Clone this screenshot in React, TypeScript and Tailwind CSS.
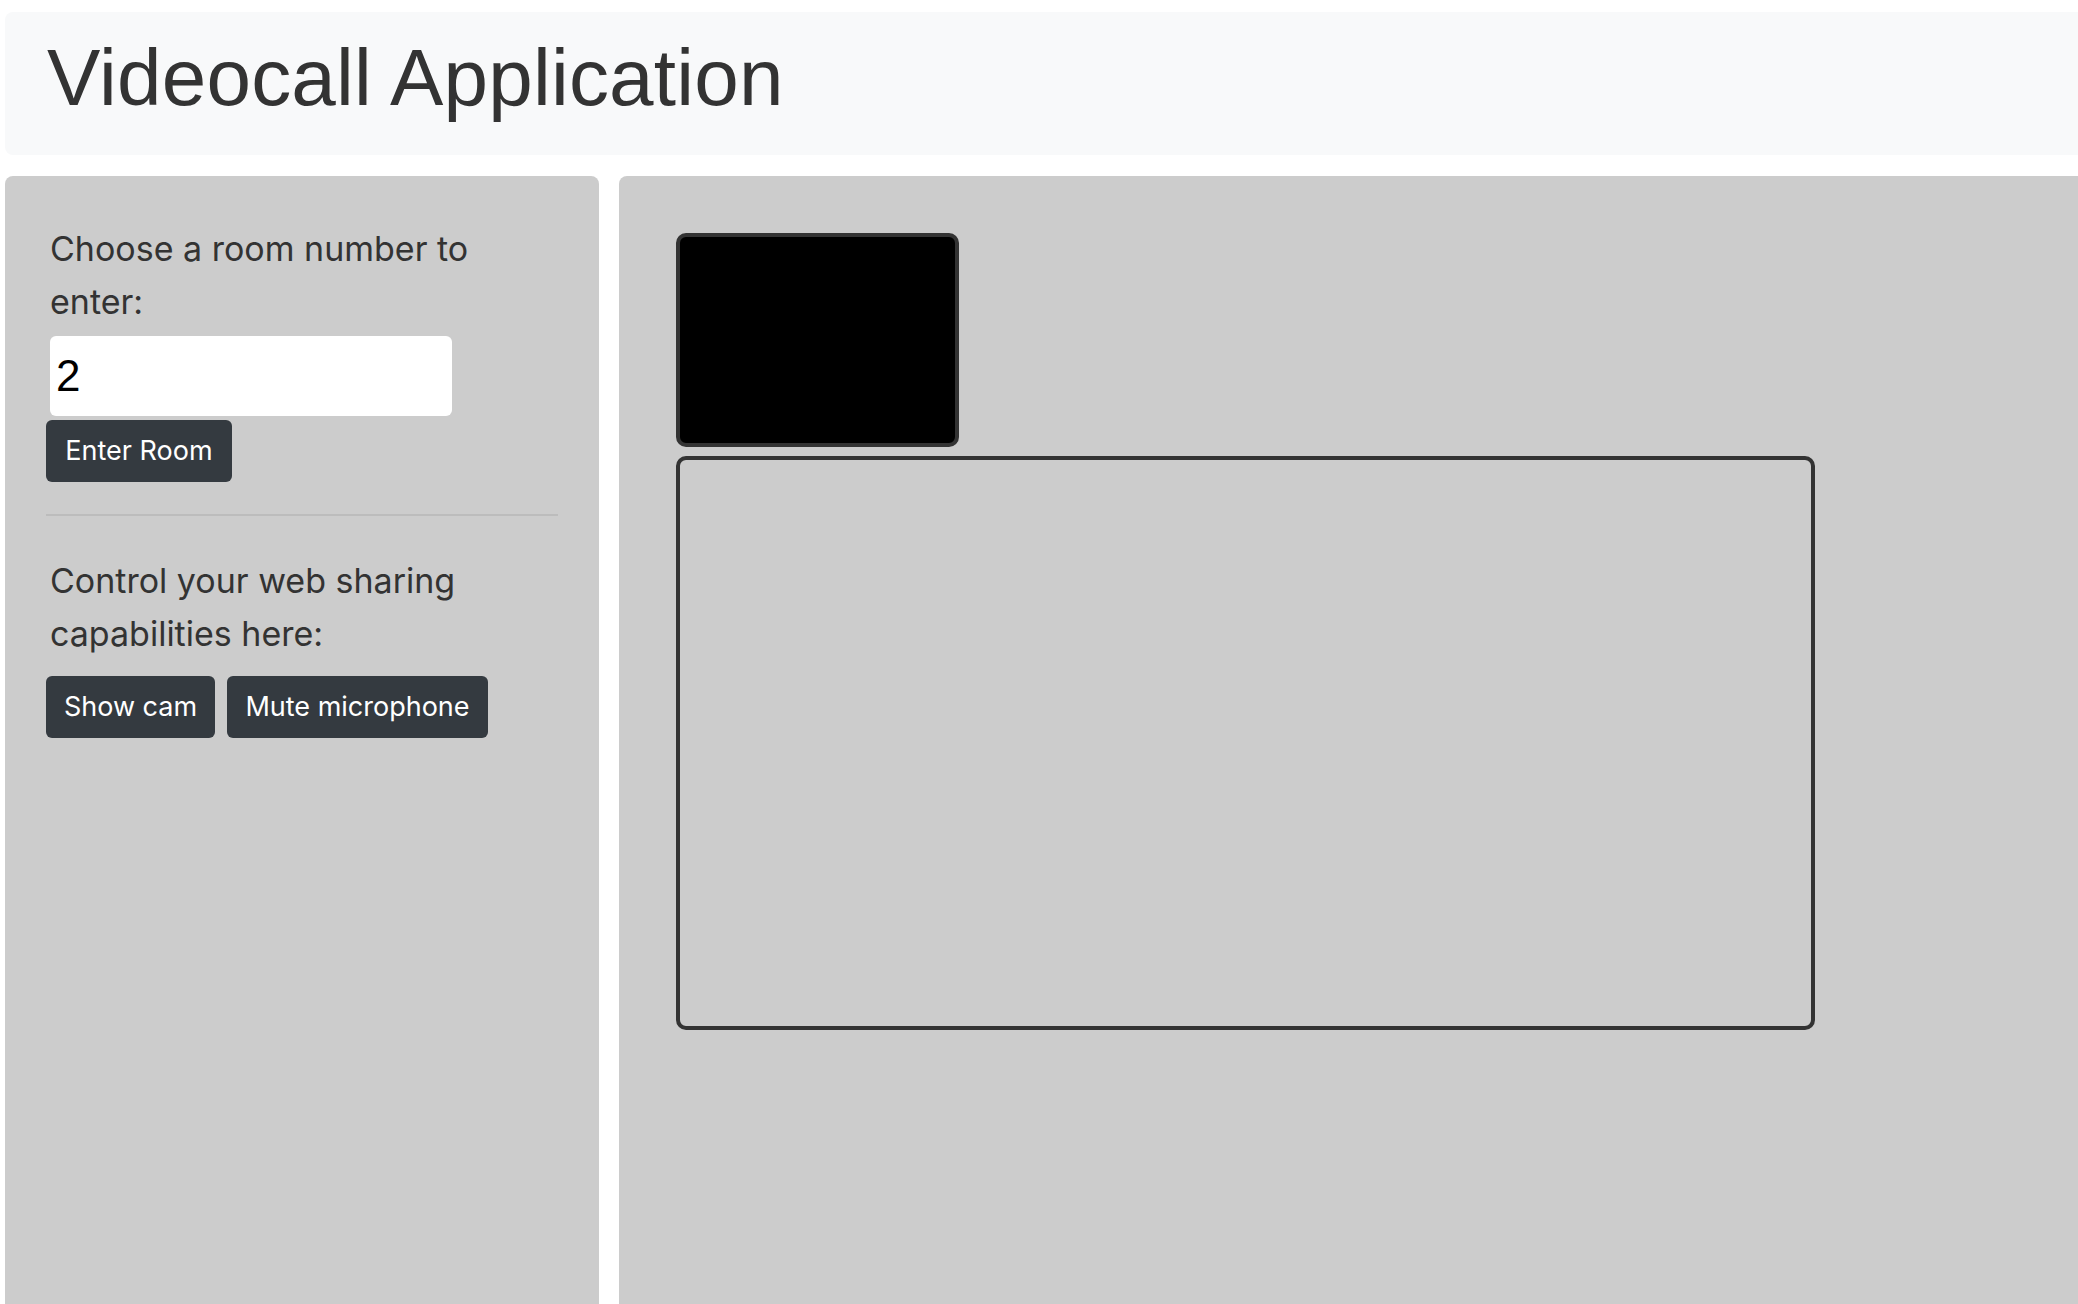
export default function App() {
  return (
    <div className="h-[1304px] w-full overflow-hidden bg-white px-[5px] pt-[12px] font-['Inter',sans-serif] text-[#333]">
      {/* Header */}
      <div className="h-[143px] w-[2100px] rounded-[8px] bg-[#f8f9fa] pl-[42px] pt-[18px]">
        <h1 className="font-['Liberation_Sans',Arial,sans-serif] text-[80px] leading-[96px] font-normal tracking-[0.2px] text-[#333]">
          Videocall Application
        </h1>
      </div>

      {/* Panels */}
      <div className="mt-[21px] flex gap-[20px]">
        {/* Left controls */}
        <div className="h-[1200px] w-[594px] shrink-0 rounded-t-[8px] bg-[#cccccc] px-[41px] pt-[46px]">
          <p className="ml-[4px] text-[34px] leading-[53px]">Choose a room number to enter:</p>
          <div className="ml-[4px] mt-[8px] flex h-[80px] w-[402px] items-center rounded-[6px] bg-white pl-[6px] font-['Liberation_Sans',Arial,sans-serif] text-[44px] text-black">
            2
          </div>
          <button className="mt-[4px] flex h-[62px] w-[186px] items-center justify-center rounded-[6px] bg-[#343a40] text-[27px] text-white">
            Enter Room
          </button>
          <div className="mt-[32px] h-[2px] w-full bg-[#bcbcbc]"></div>
          <p className="ml-[4px] mt-[38px] text-[34px] leading-[53px]">
            Control your web sharing capabilities here:
          </p>
          <div className="mt-[16px] flex gap-[12px]">
            <button className="flex h-[62px] w-[169px] items-center justify-center rounded-[6px] bg-[#343a40] text-[27px] text-white">
              Show cam
            </button>
            <button className="flex h-[62px] w-[261px] items-center justify-center rounded-[6px] bg-[#343a40] text-[27px] text-white">
              Mute microphone
            </button>
          </div>
        </div>

        {/* Video area */}
        <div className="h-[1200px] w-[1500px] shrink-0 rounded-t-[8px] bg-[#cccccc] pl-[57px] pt-[57px]">
          <div className="h-[214px] w-[283px] rounded-[10px] border-4 border-[#333] bg-black"></div>
          <div className="mt-[9px] h-[574px] w-[1139px] rounded-[10px] border-4 border-[#333]"></div>
        </div>
      </div>
    </div>
  );
}
